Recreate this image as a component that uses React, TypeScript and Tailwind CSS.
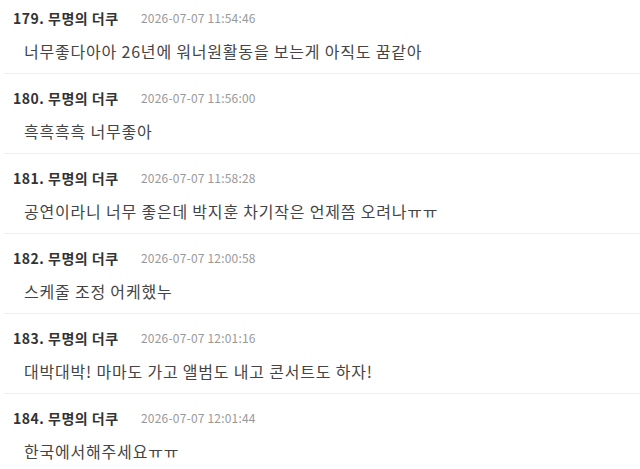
const comments = [
  { no: 179, nick: "무명의 더쿠", time: "2026-07-07 11:54:46", body: "너무좋다아아 26년에 워너원활동을 보는게 아직도 꿈같아" },
  { no: 180, nick: "무명의 더쿠", time: "2026-07-07 11:56:00", body: "흑흑흑흑 너무좋아" },
  { no: 181, nick: "무명의 더쿠", time: "2026-07-07 11:58:28", body: "공연이라니 너무 좋은데 박지훈 차기작은 언제쯤 오려나ㅠㅠ" },
  { no: 182, nick: "무명의 더쿠", time: "2026-07-07 12:00:58", body: "스케줄 조정 어케했누" },
  { no: 183, nick: "무명의 더쿠", time: "2026-07-07 12:01:16", body: "대박대박! 마마도 가고 앨범도 내고 콘서트도 하자!" },
  { no: 184, nick: "무명의 더쿠", time: "2026-07-07 12:01:44", body: "한국에서해주세요ㅠㅠ" },
];

export default function App() {
  return (
    <div
      className="w-[640px] h-[469px] overflow-hidden bg-white"
      style={{ fontFamily: '"Noto Sans CJK KR", "Noto Sans", sans-serif' }}
    >
      <ul className="-mt-[6px] pl-[4px]">
        {comments.map((c) => (
          <li key={c.no} className="h-[80px] border-b border-[#eeeeee] pt-[14px]">
            <div className="flex items-center h-[20px] pl-[9px]">
              <span className="text-[14px] font-bold tracking-[0.5px] text-[#333333] w-[128px]">
                {c.no}. {c.nick}
              </span>
              <span className="text-[12px] tracking-[0.2px] text-[#999999]">{c.time}</span>
            </div>
            <p className="mt-[12px] h-[22px] leading-[22px] pl-[20px] text-[16px] tracking-[0.8px] text-[#444444]">
              {c.body}
            </p>
          </li>
        ))}
      </ul>
    </div>
  );
}
